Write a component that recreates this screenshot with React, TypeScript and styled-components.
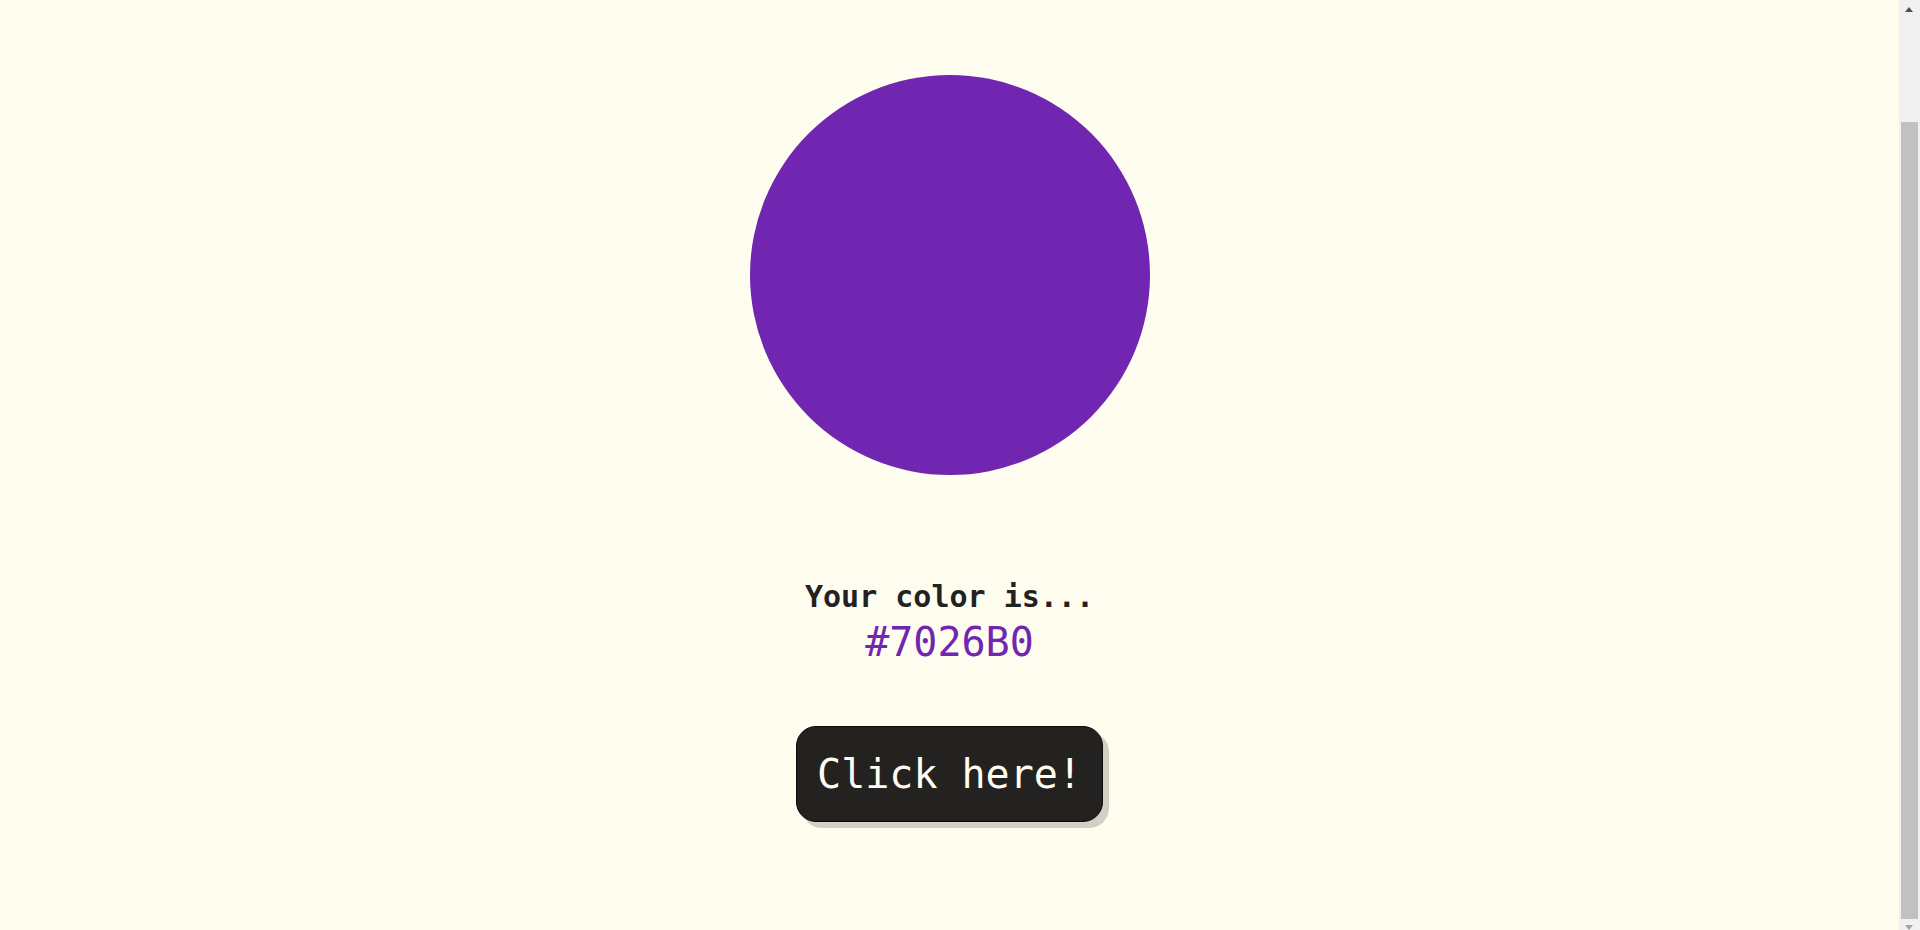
import React from "react";
import styled, { createGlobalStyle } from "styled-components";

const GlobalStyle = createGlobalStyle`
  html, body {
    margin: 0;
    padding: 0;
    background: #fffcf0;
    overflow: hidden;
  }
  body {
    font-family: "DejaVu Sans Mono", "Liberation Mono", monospace;
  }
`;

const Page = styled.main`
  box-sizing: border-box;
  height: 100vh;
  display: flex;
  flex-direction: column;
  align-items: center;
  padding: 75px 21px 0 0;
`;

const Swatch = styled.div<{ $color: string }>`
  width: 400px;
  height: 400px;
  border-radius: 50%;
  background: ${(p) => p.$color};
  margin-bottom: 104px;
`;

const Label = styled.p`
  margin: 0 0 3px;
  font-size: 30px;
  line-height: 36px;
  font-weight: 700;
  color: #222222;
`;

const Hex = styled.p<{ $color: string }>`
  margin: 0 0 60px;
  font-size: 40px;
  line-height: 48px;
  color: ${(p) => p.$color};
`;

const Button = styled.button`
  font-family: "DejaVu Sans Mono", "Liberation Mono", monospace;
  font-size: 40px;
  line-height: 48px;
  padding: 23px 20px;
  color: #fffcf0;
  background: #242220;
  border: 1px solid #0a0a0a;
  border-radius: 20px;
  box-shadow: 6px 6px 0 #d4cfc3;
  cursor: pointer;
`;

/* Drawn scrollbar, overlaid on the right edge like the browser's own */
const ScrollTrack = styled.div`
  position: fixed;
  top: 0;
  right: 0;
  bottom: 0;
  width: 21px;
  background: #f1f1f1;
`;

const Arrow = styled.span<{ $dir: "up" | "down"; $disabled?: boolean }>`
  position: absolute;
  left: 6px;
  width: 0;
  height: 0;
  border-left: 4.5px solid transparent;
  border-right: 4.5px solid transparent;
  ${(p) =>
    p.$dir === "up"
      ? `top: 7px; border-bottom: 5px solid ${p.$disabled ? "#a3a3a3" : "#505050"};`
      : `bottom: 0px; border-top: 5px solid ${p.$disabled ? "#a3a3a3" : "#505050"};`}
`;

const Thumb = styled.div`
  position: absolute;
  left: 2px;
  width: 17px;
  background: #c1c1c1;
`;

export default function App() {
  const color = "#7026B0";
  return (
    <>
      <GlobalStyle />
      <Page>
        <Swatch $color={color} />
        <Label>Your color is...</Label>
        <Hex $color={color}>{color}</Hex>
        <Button type="button">Click here!</Button>
      </Page>
      <ScrollTrack aria-hidden="true">
        <Arrow $dir="up" />
        <Thumb style={{ top: 122, height: 797 }} />
        <Arrow $dir="down" $disabled />
      </ScrollTrack>
    </>
  );
}
